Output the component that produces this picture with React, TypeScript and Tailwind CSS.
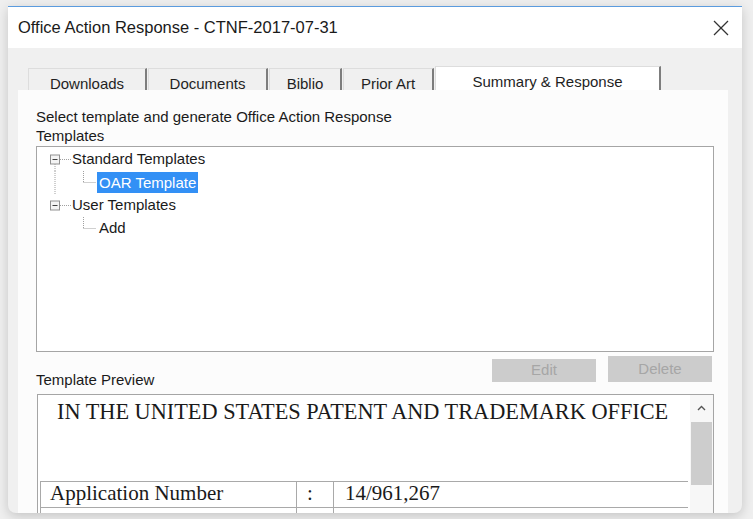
import React from 'react';

const ui = { fontFamily: '"Liberation Sans", Arial, sans-serif' };
const serif = { fontFamily: '"Liberation Serif", "Times New Roman", serif' };

const tabs = [
  { label: 'Downloads', w: 'w-[119px]' },
  { label: 'Documents', w: 'w-[120px]' },
  { label: 'Biblio', w: 'w-[73px]' },
  { label: 'Prior Art', w: 'w-[91px]' },
];

const ParentGutter: React.FC<{ line: boolean }> = ({ line }) => (
  <svg width="35" height="23" className="shrink-0">
    <rect x="13.5" y="7" width="9" height="9" fill="#f4f4f4" stroke="#919191" />
    <line x1="15.5" y1="11.5" x2="20.5" y2="11.5" stroke="#404040" />
    <line x1="23" y1="11.5" x2="34" y2="11.5" stroke="#a0a0a0" strokeDasharray="1 1" />
    {line && <line x1="18" y1="16" x2="18" y2="23" stroke="#a0a0a0" strokeDasharray="1 1" />}
  </svg>
);

const ChildGutter: React.FC<{ line: boolean }> = ({ line }) => (
  <svg width="60" height="23" className="shrink-0">
    {line && <line x1="18" y1="0" x2="18" y2="23" stroke="#a0a0a0" strokeDasharray="1 1" />}
    <line x1="46.5" y1="0" x2="46.5" y2="11.5" stroke="#a0a0a0" strokeDasharray="1 1" />
    <line x1="46.5" y1="11.5" x2="59" y2="11.5" stroke="#a0a0a0" strokeDasharray="1 1" />
  </svg>
);

const App: React.FC = () => {
  return (
    <div className="w-[753px] h-[519px] bg-[#efefef] pt-[6px] pl-[8px] overflow-hidden" style={ui}>
      <div className="w-[734px] h-[507px] bg-[#f0f0f0] border-t border-[#5b9bde] rounded-b-[8px] shadow-[0_3px_12px_rgba(0,0,0,0.18)] overflow-hidden flex flex-col">
        {/* title bar */}
        <div className="h-[41px] bg-white flex items-center justify-between pl-[10px] pr-[13px] shrink-0">
          <span className="text-[16.5px] text-[#1a1a1a]">Office Action Response - CTNF-2017-07-31</span>
          <svg width="16" height="16" viewBox="0 0 16 16">
            <line x1="1" y1="1" x2="15" y2="15" stroke="#333" strokeWidth="1.3" />
            <line x1="15" y1="1" x2="1" y2="15" stroke="#333" strokeWidth="1.3" />
          </svg>
        </div>

        <div className="flex-1 flex flex-col pl-[10px] pr-[14px] pt-[18px] min-h-0">
          {/* tabs */}
          <div className="flex items-end h-[24px] ml-[10px] shrink-0 text-[15px] text-[#1f1f1f]">
            {tabs.map((t) => (
              <div
                key={t.label}
                className={`${t.w} h-[22px] bg-[#f0f0f0] border-t border-l border-[#dddddd] border-r-2 border-r-[#7d7d7d] flex justify-center pt-[6px] leading-[17px] mr-[1px]`}
              >
                {t.label}
              </div>
            ))}
            <div className="w-[226px] h-[24px] bg-white border-t border-l border-[#dddddd] border-r-2 border-r-[#7d7d7d] flex justify-center pt-[6px] leading-[17px]">
              Summary &amp; Response
            </div>
          </div>

          {/* panel */}
          <div className="flex-1 bg-[#fcfcfc] pl-[18px] pr-[14px] pt-[18px] flex flex-col min-h-0 text-[15px] text-[#1a1a1a]">
            <div className="leading-[17px]">Select template and generate Office Action Response</div>
            <div className="leading-[17px] mt-[2px]">Templates</div>

            <div className="mt-[2px] h-[206px] border border-[#a5a5a5] bg-white pt-[1px] shrink-0">
              <div className="flex items-center h-[23px]">
                <ParentGutter line />
                <span>Standard Templates</span>
              </div>
              <div className="flex items-center h-[23px]">
                <ChildGutter line />
                <span className="bg-[#3390f5] text-white px-[2px] h-[21px] leading-[21px]">OAR Template</span>
              </div>
              <div className="flex items-center h-[23px]">
                <ParentGutter line={false} />
                <span>User Templates</span>
              </div>
              <div className="flex items-center h-[23px]">
                <ChildGutter line={false} />
                <span className="px-[2px]">Add</span>
              </div>
            </div>

            <div className="flex items-end justify-between mt-[4px] h-[26px] shrink-0">
              <span className="leading-[15px] mb-[-5px]">Template Preview</span>
              <div className="flex items-end gap-[12px] text-[#a6a6a6] mr-[2px]">
                <div className="w-[104px] h-[23px] bg-[#cccccc] flex items-center justify-center">Edit</div>
                <div className="w-[104px] h-[26px] bg-[#cccccc] flex items-center justify-center">Delete</div>
              </div>
            </div>

            <div className="mt-[12px] ml-[1px] flex-1 border border-[#a5a5a5] bg-white flex min-h-[140px]">
              <div className="flex-1 pt-[6px]" style={serif}>
                <div className="text-[22.3px] leading-[22px] text-[#1a1a1a] pl-[19px] whitespace-nowrap">
                  IN THE UNITED STATES PATENT AND TRADEMARK OFFICE
                </div>
                <table className="mt-[58px] ml-[2px] w-[648px] border-collapse text-[21px] leading-[21px] text-[#1a1a1a]">
                  <tbody>
                    <tr className="h-[26px]">
                      <td className="w-[256px] border border-[#a9a9a9] pl-[9px] pt-[1px] align-top">Application Number</td>
                      <td className="w-[37px] border border-[#a9a9a9] pl-[10px] pt-[1px] align-top">:</td>
                      <td className="border border-[#a9a9a9] border-r-0 pl-[11px] pt-[1px] align-top">14/961,267</td>
                    </tr>
                    <tr className="h-[26px]">
                      <td className="border border-[#a9a9a9]"></td>
                      <td className="border border-[#a9a9a9]"></td>
                      <td className="border border-[#a9a9a9] border-r-0"></td>
                    </tr>
                  </tbody>
                </table>
              </div>
              <div className="w-[23px] bg-[#f7f7f7] flex flex-col items-center shrink-0">
                <div className="h-[26px] flex items-center justify-center">
                  <svg width="9" height="6" viewBox="0 0 9 6">
                    <polyline points="1,5 4.5,1.5 8,5" fill="none" stroke="#555" strokeWidth="1.4" />
                  </svg>
                </div>
                <div className="w-[21px] h-[63px] bg-[#cdcdcd] mt-[1px]"></div>
              </div>
            </div>
          </div>
        </div>
      </div>
    </div>
  );
};

export default App;
